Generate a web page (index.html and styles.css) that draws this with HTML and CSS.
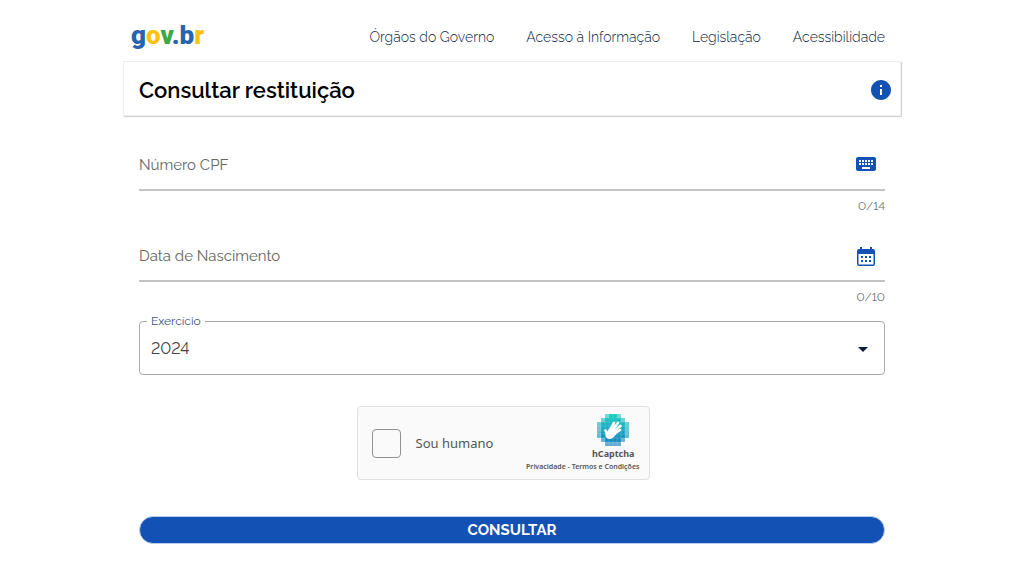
FILE: index.html
```html
<!DOCTYPE html>
<html lang="pt-BR">
<head>
<meta charset="utf-8">
<meta name="viewport" content="width=device-width, initial-scale=1">
<title>Consultar restituição</title>
<link rel="stylesheet" href="styles.css">
</head>
<body>
<div class="page">
  <header class="topbar">
    <a class="logo" href="#" aria-label="gov.br"><span class="blue">g</span><span class="yellow">o</span><span class="green">v</span><span class="blue">.b</span><span class="yellow">r</span></a>
    <nav class="nav">
      <a href="#">Órgãos do Governo</a>
      <a href="#">Acesso à Informação</a>
      <a href="#">Legislação</a>
      <a href="#">Acessibilidade</a>
    </nav>
  </header>
  <div class="card">
    <h1 class="title">Consultar restituição</h1>
    <button class="icon-button info" type="button" aria-label="Informações">
      <svg viewBox="0 0 24 24" width="24" height="24"><path d="M12 2C6.480 2 2 6.480 2 12s4.480 10 10 10 10-4.480 10-10S17.520 2 12 2zm1 15h-2v-6h2v6zm0-8h-2V7h2v2z"/></svg>
    </button>
  </div>
  <form class="form">
    <div class="field">
      <div class="field-row">
        <input class="field-input" type="text" aria-label="Número CPF" placeholder="Número CPF">
        <button class="icon-button" type="button" aria-label="Teclado virtual">
          <svg viewBox="0 0 24 24" width="24" height="24"><path d="M20 5H4c-1.100 0-2 .9-2 2v10c0 1.100.9 2 2 2h16c1.100 0 2-.9 2-2V7c0-1.100-.9-2-2-2zM5 8h2v2H5zm3 0h2v2H8zm3 0h2v2h-2zm3 0h2v2h-2zm3 0h2v2h-2zM5 11h2v2H5zm3 0h2v2H8zm3 0h2v2h-2zm3 0h2v2h-2zm3 0h2v2h-2zM8 15h8v2H8z" fill-rule="evenodd"/></svg>
        </button>
      </div>
      <span class="counter">0/14</span>
    </div>
    <div class="field">
      <div class="field-row">
        <input class="field-input" type="text" aria-label="Data de Nascimento" placeholder="Data de Nascimento">
        <button class="icon-button calendar" type="button" aria-label="Abrir calendário">
          <svg viewBox="0 0 24 24" width="24" height="24"><path fill-rule="evenodd" d="M5 4h1V2h2v2h8V2h2v2h1a2 2 0 0 1 2 2v13a2 2 0 0 1-2 2H5a2 2 0 0 1-2-2V6c0-1.100.9-2 2-2zM4.500 9v10.500h15V9zM7 11h2v2H7zm4 0h2v2h-2zm4 0h2v2h-2zM7 15h2v2H7zm4 0h2v2h-2zm4 0h2v2h-2z"/></svg>
        </button>
      </div>
      <span class="counter">0/10</span>
    </div>
    <fieldset class="select-box">
      <legend class="select-legend"><label for="exercicio">Exercício</label></legend>
      <div class="select-row">
        <select class="select" id="exercicio"><option>2024</option></select>
        <svg class="arrow" viewBox="0 0 10 5" width="10" height="5" aria-hidden="true"><path d="M0 0h10L5 5z"/></svg>
      </div>
    </fieldset>
    <div class="captcha-area">
      <div class="captcha">
        <input class="captcha-check" type="checkbox" id="humano">
        <label class="captcha-label" for="humano">Sou humano</label>
        <div class="captcha-brand">
          <div class="captcha-mark">
            <svg viewBox="0 0 32 32" width="32" height="32" aria-hidden="true">
              <defs><linearGradient id="sea" gradientUnits="userSpaceOnUse" x1="0" y1="0" x2="0" y2="32"><stop offset="0" stop-color="#06cdbc"/><stop offset="1" stop-color="#0472bd"/></linearGradient></defs>
              <path fill="url(#sea)" opacity=".6" d="M8 0h16v4h4v4h4v16h-4v4h-4v4H8v-4H4v-4H0V8h4V4h4z"/>
              <path fill="url(#sea)" opacity=".8" d="M12 0h8v4h4v4h4v16h-4v4H8v-4H4V8h4V4h4z"/>
              <path fill="none" stroke="#fff" stroke-opacity=".13" d="M4 4v24M8 0v32M12 0v32M16 0v32M20 0v32M24 0v32M28 4v24M4 4h24M0 8h32M0 12h32M0 16h32M0 20h32M0 24h32M4 28h24"/>
              <path fill="none" stroke="#fff" stroke-width="2.600" stroke-linecap="round" d="M13 16l4-7M14.500 17l6.500-8M16 18l7.500-6M17 20l6-4M10 20L8.500 16.500"/>
              <path fill="#fff" d="M12 15l4 0 3 5.500c-2 3-5 5-7 4.500s-4-2-3.500-5z"/>
            </svg>
            <span class="captcha-name">hCaptcha</span>
          </div>
          <div class="captcha-links"><a href="#">Privacidade</a> - <a href="#">Termos e Condições</a></div>
        </div>
      </div>
    </div>
    <button class="submit" type="submit">CONSULTAR</button>
  </form>
</div>
</body>
</html>
```
FILE: styles.css
```css
* { box-sizing: border-box; }
body {
  margin: 0;
  background: #fff;
  color: #000;
  font-family: Raleway, Lato, "Open Sans", sans-serif;
  font-variant-numeric: lining-nums;
}
a { color: inherit; text-decoration: none; }
.page { max-width: 778px; margin: 0 auto; }
.topbar {
  display: flex;
  align-items: center;
  justify-content: space-between;
  padding: 12px 16px 0 8px;
  min-height: 61px;
}
.logo {
  padding-bottom: 3px;
  font-family: Roboto, sans-serif;
  font-weight: 900;
  font-size: 26px;
  line-height: 45px;
}
.blue { color: #2864ae; }
.yellow { color: #fdc112; }
.green { color: #3fa845; }
.nav {
  display: flex;
  gap: 32px;
  color: #071d41;
  font-size: 14px;
  font-weight: 300;
}
.card {
  display: flex;
  align-items: center;
  justify-content: space-between;
  padding: 2px 7px 0 15px;
  min-height: 55px;
  border: 1px solid #eee;
  box-shadow: 1px 1px 1px #d4d4d4;
}
.title { margin: 0; font-size: 22px; line-height: 32px; font-weight: 600; }
.icon-button {
  display: flex;
  padding: 0;
  border: 0;
  background: none;
  fill: #1351b4;
}
.calendar { padding-top: 4px; }
.form { padding: 23px 16px; }
.field { display: flex; flex-direction: column; margin-bottom: 16px; }
.field-row {
  display: flex;
  align-items: center;
  padding-right: 7px;
  min-height: 52px;
  border-bottom: 2px solid #c4c4c4;
}
.field-input {
  flex: 1;
  min-width: 0;
  padding: 2px 0 0;
  border: 0;
  outline: 0;
  background: none;
  font-family: inherit;
  font-size: 15px;
  line-height: 24px;
}
.field-input::placeholder { color: #666; opacity: 1; }
.counter {
  align-self: flex-end;
  margin-top: 8px;
  color: #777;
  font-size: 12px;
  line-height: 15px;
}
.select-box {
  min-width: 0;
  margin: -8px 0 0;
  padding: 0 16px 0 7px;
  border: 1px solid #aaa;
  border-radius: 4px;
}
.select-legend {
  padding: 1px 4px 0;
  color: #3c557a;
  font-size: 12px;
  line-height: 15px;
}
.select-row { display: flex; align-items: center; padding-left: 4px; }
.select {
  flex: 1;
  min-width: 0;
  height: 45px;
  padding: 0 0 6px;
  border: 0;
  background: none;
  appearance: none;
  color: #444;
  font-family: inherit;
  font-variant-numeric: inherit;
  font-size: 16px;
}
.arrow { margin-bottom: 4px; fill: #071d41; }
.captcha-area {
  display: flex;
  justify-content: center;
  margin: 31px 0 36px;
  padding-right: 18px;
}
.captcha {
  display: flex;
  align-items: center;
  width: 293px;
  min-height: 74px;
  padding: 0 9px 0 14px;
  border: 1px solid #e0e0e0;
  border-radius: 4px;
  background: #fafafa;
  color: #555;
  font-family: "Noto Sans", "Open Sans", sans-serif;
}
.captcha-check {
  flex: none;
  width: 29px;
  height: 29px;
  margin: 0 15px 0 0;
  border: 1px solid #919191;
  border-radius: 4px;
  background: #fafafa;
  appearance: none;
}
.captcha-label { flex: 1; font-size: 13px; white-space: nowrap; }
.captcha-brand { display: flex; flex-direction: column; align-items: flex-end; }
.captcha-mark {
  display: flex;
  flex-direction: column;
  align-items: center;
  margin-right: 5px;
}
.captcha-name { font-size: 9px; line-height: 15px; font-weight: 700; }
.captcha-links { font-size: 7px; line-height: 12px; font-weight: 600; white-space: nowrap; }
.submit {
  display: block;
  width: 100%;
  min-height: 28px;
  padding: 0;
  border: 1px solid #b9cceb;
  border-radius: 14px;
  background: #1351b4;
  color: #fff;
  font-family: inherit;
  font-size: 15px;
  font-weight: 700;
}
```
